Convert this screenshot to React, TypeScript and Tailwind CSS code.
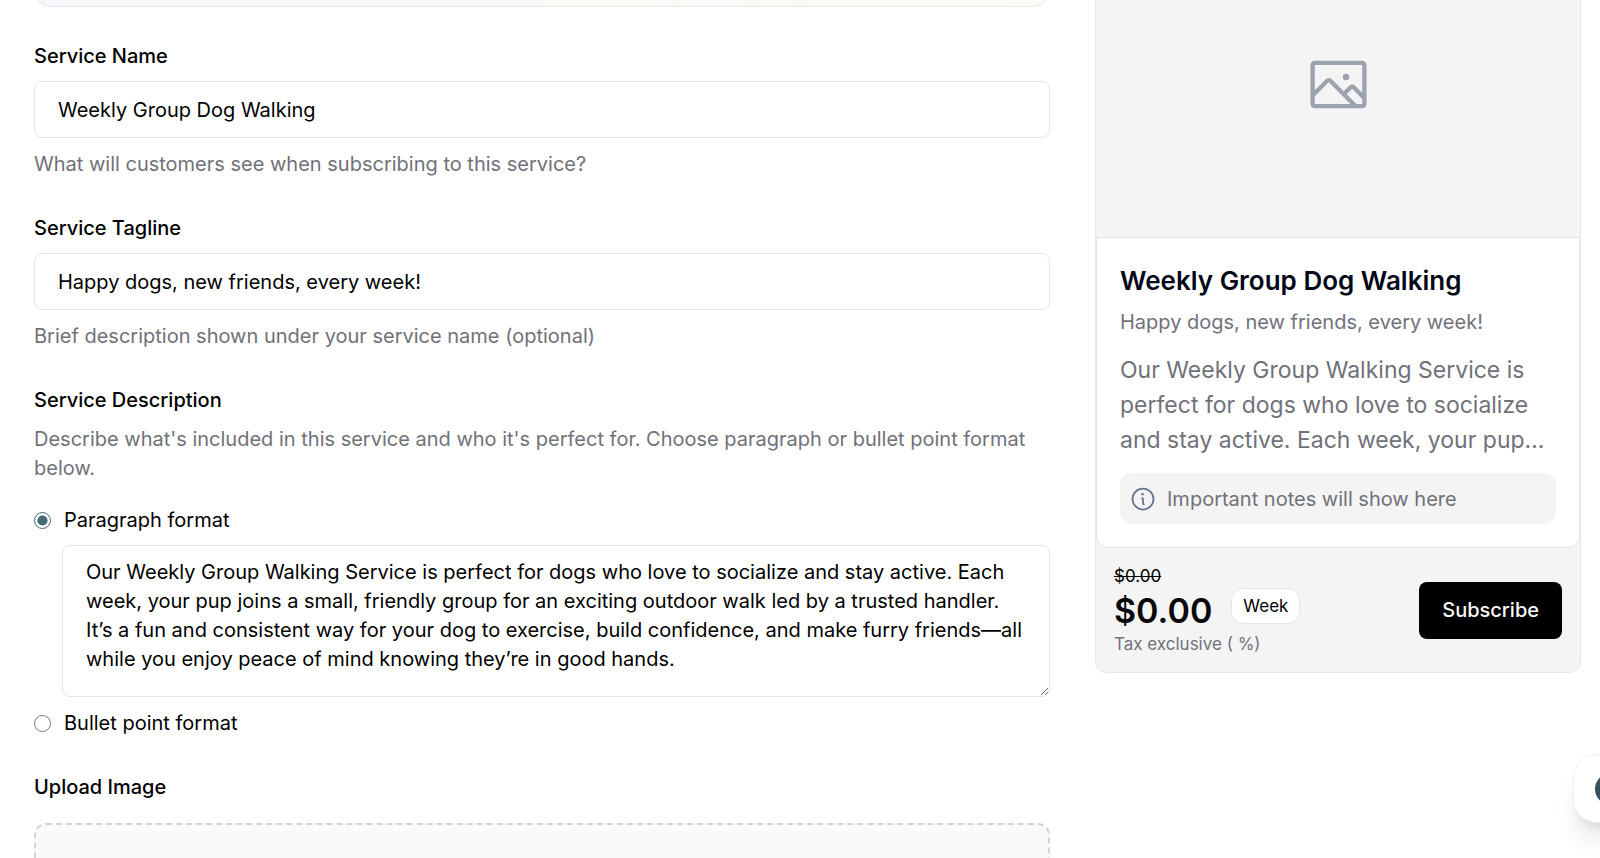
import { useState } from "react";
import { PiImage, PiInfo } from "react-icons/pi";

const PREVIEW_LENGTH = 111;

const inputClass =
  "block w-full rounded-lg border border-[#e5e5e8] bg-white px-[23px] text-xl text-black outline-none";

const truncate = (text: string) =>
  text.length > PREVIEW_LENGTH ? `${text.slice(0, PREVIEW_LENGTH)}…` : text;

const TextField = ({ id, label, hint, value, onChange }: {
  id: string;
  label: string;
  hint: string;
  value: string;
  onChange: (value: string) => void;
}) => (
  <div>
    <label htmlFor={id} className="block text-xl leading-7 font-medium">{label}</label>
    <input
      id={id}
      type="text"
      value={value}
      onChange={(e) => onChange(e.target.value)}
      className={`${inputClass} mt-[11px] h-[57px]`}
    />
    <p className="mt-3 text-xl leading-7 text-[#71717a]">{hint}</p>
  </div>
);

const FormatOption = ({ id, label, checked, onSelect }: {
  id: string;
  label: string;
  checked: boolean;
  onSelect: () => void;
}) => (
  <div className="flex items-center gap-[13px]">
    <input id={id} type="radio" name="format" checked={checked} onChange={onSelect} className="size-[17px] accent-[#426b73]" />
    <label htmlFor={id} className="text-xl leading-7">{label}</label>
  </div>
);

const App = () => {
  const [name, setName] = useState("Weekly Group Dog Walking");
  const [tagline, setTagline] = useState("Happy dogs, new friends, every week!");
  const [format, setFormat] = useState("paragraph");
  const [description, setDescription] = useState(
    "Our Weekly Group Walking Service is perfect for dogs who love to socialize and stay active. Each week, your pup joins a small, friendly group for an exciting outdoor walk led by a trusted handler. It’s a fun and consistent way for your dog to exercise, build confidence, and make furry friends—all while you enjoy peace of mind knowing they’re in good hands."
  );

  return (
    <div className="h-screen overflow-hidden bg-white font-['Inter',sans-serif] text-black">
      <main className="flex items-start gap-[45px] pr-[19px] pl-[34px]">
        {/* Form */}
        <form className="min-w-0 flex-1">
          <div className="h-[7px] overflow-hidden">
            <div className="-mt-10 h-[47px] rounded-2xl border border-[#e5e7eb] bg-linear-to-r from-[#f5f7fa] to-[#fafdf4]" />
          </div>

          <div className="mt-[35px] flex flex-col gap-9">
            <TextField
              id="name"
              label="Service Name"
              hint="What will customers see when subscribing to this service?"
              value={name}
              onChange={setName}
            />
            <TextField
              id="tagline"
              label="Service Tagline"
              hint="Brief description shown under your service name (optional)"
              value={tagline}
              onChange={setTagline}
            />

            <div>
              <label htmlFor="description" className="block text-xl leading-7 font-medium">Service Description</label>
              <p className="mt-[11px] text-xl leading-[29px] text-[#71717a]">
                Describe what's included in this service and who it's perfect for. Choose paragraph or bullet point format below.
              </p>
              <div className="mt-[23px]">
                <FormatOption
                  id="paragraph"
                  label="Paragraph format"
                  checked={format === "paragraph"}
                  onSelect={() => setFormat("paragraph")}
                />
                <div className="mt-[11px] mb-3 pl-7">
                  <textarea
                    id="description"
                    value={description}
                    onChange={(e) => setDescription(e.target.value)}
                    className={`${inputClass} h-[152px] resize py-3 leading-[29px]`}
                  />
                </div>
                <FormatOption
                  id="bullet"
                  label="Bullet point format"
                  checked={format === "bullet"}
                  onSelect={() => setFormat("bullet")}
                />
              </div>
            </div>

            <div>
              <h3 className="text-xl leading-7 font-medium">Upload Image</h3>
              <div className="mt-[22px] h-60 rounded-xl border-2 border-dashed border-[#d1d5db] bg-[#fafafa]" />
            </div>
          </div>
        </form>

        {/* Preview card */}
        <aside className="w-[486px] shrink-0 rounded-b-xl border border-t-0 border-[#e8e8ea] bg-[#f4f4f4]">
          <div className="flex h-[237px] justify-center pt-[50px]">
            <PiImage className="size-[69px] text-[#9ca3af]" />
          </div>

          <div className="rounded-b-xl border border-[#e5e5e8] bg-white px-[23px] pt-[25px] pb-[23px]">
            <h2 className="text-[26px] leading-9 font-semibold text-[#020817]">{name}</h2>
            <p className="mt-[9px] text-xl leading-7 text-[#71717a]">{tagline}</p>
            <p className="mt-[17px] text-[23px] leading-[35px] text-[#71717a]">{truncate(description)}</p>
            <div className="mt-[15px] flex h-[51px] items-center gap-[10px] rounded-xl bg-[#f4f4f4] px-[9px]">
              <PiInfo className="size-7 text-[#64748b]" />
              <span className="text-xl leading-7 text-[#71717a]">Important notes will show here</span>
            </div>
          </div>

          <div className="flex items-center justify-between px-[18px] pt-4 pb-4">
            <div>
              <s className="block text-[17px] leading-6">$0.00</s>
              <div className="flex items-center gap-[19px]">
                <span className="text-[34px] leading-[43px] font-semibold text-[#09090b]">$0.00</span>
                <span className="mb-2 rounded-xl border border-[#e5e5e8] bg-white px-[11px] py-[5px] text-[17px] leading-6">Week</span>
              </div>
              <p className="text-[17px] leading-6 text-[#71717a]">Tax exclusive ( %)</p>
            </div>
            <button type="button" className="h-[57px] rounded-lg bg-black px-[23px] text-xl font-medium text-[#fafafa]">
              Subscribe
            </button>
          </div>
        </aside>
      </main>

      {/* Chat launcher */}
      <button
        type="button"
        aria-label="Open chat"
        className="fixed -right-11 bottom-[35px] flex h-[69px] w-[71px] items-center rounded-3xl border border-[#f0f0f0] bg-white pl-[21px] shadow-xl"
      >
        <span className="size-8 rounded-full bg-[#37505c]" />
      </button>
    </div>
  );
};

export default App;
